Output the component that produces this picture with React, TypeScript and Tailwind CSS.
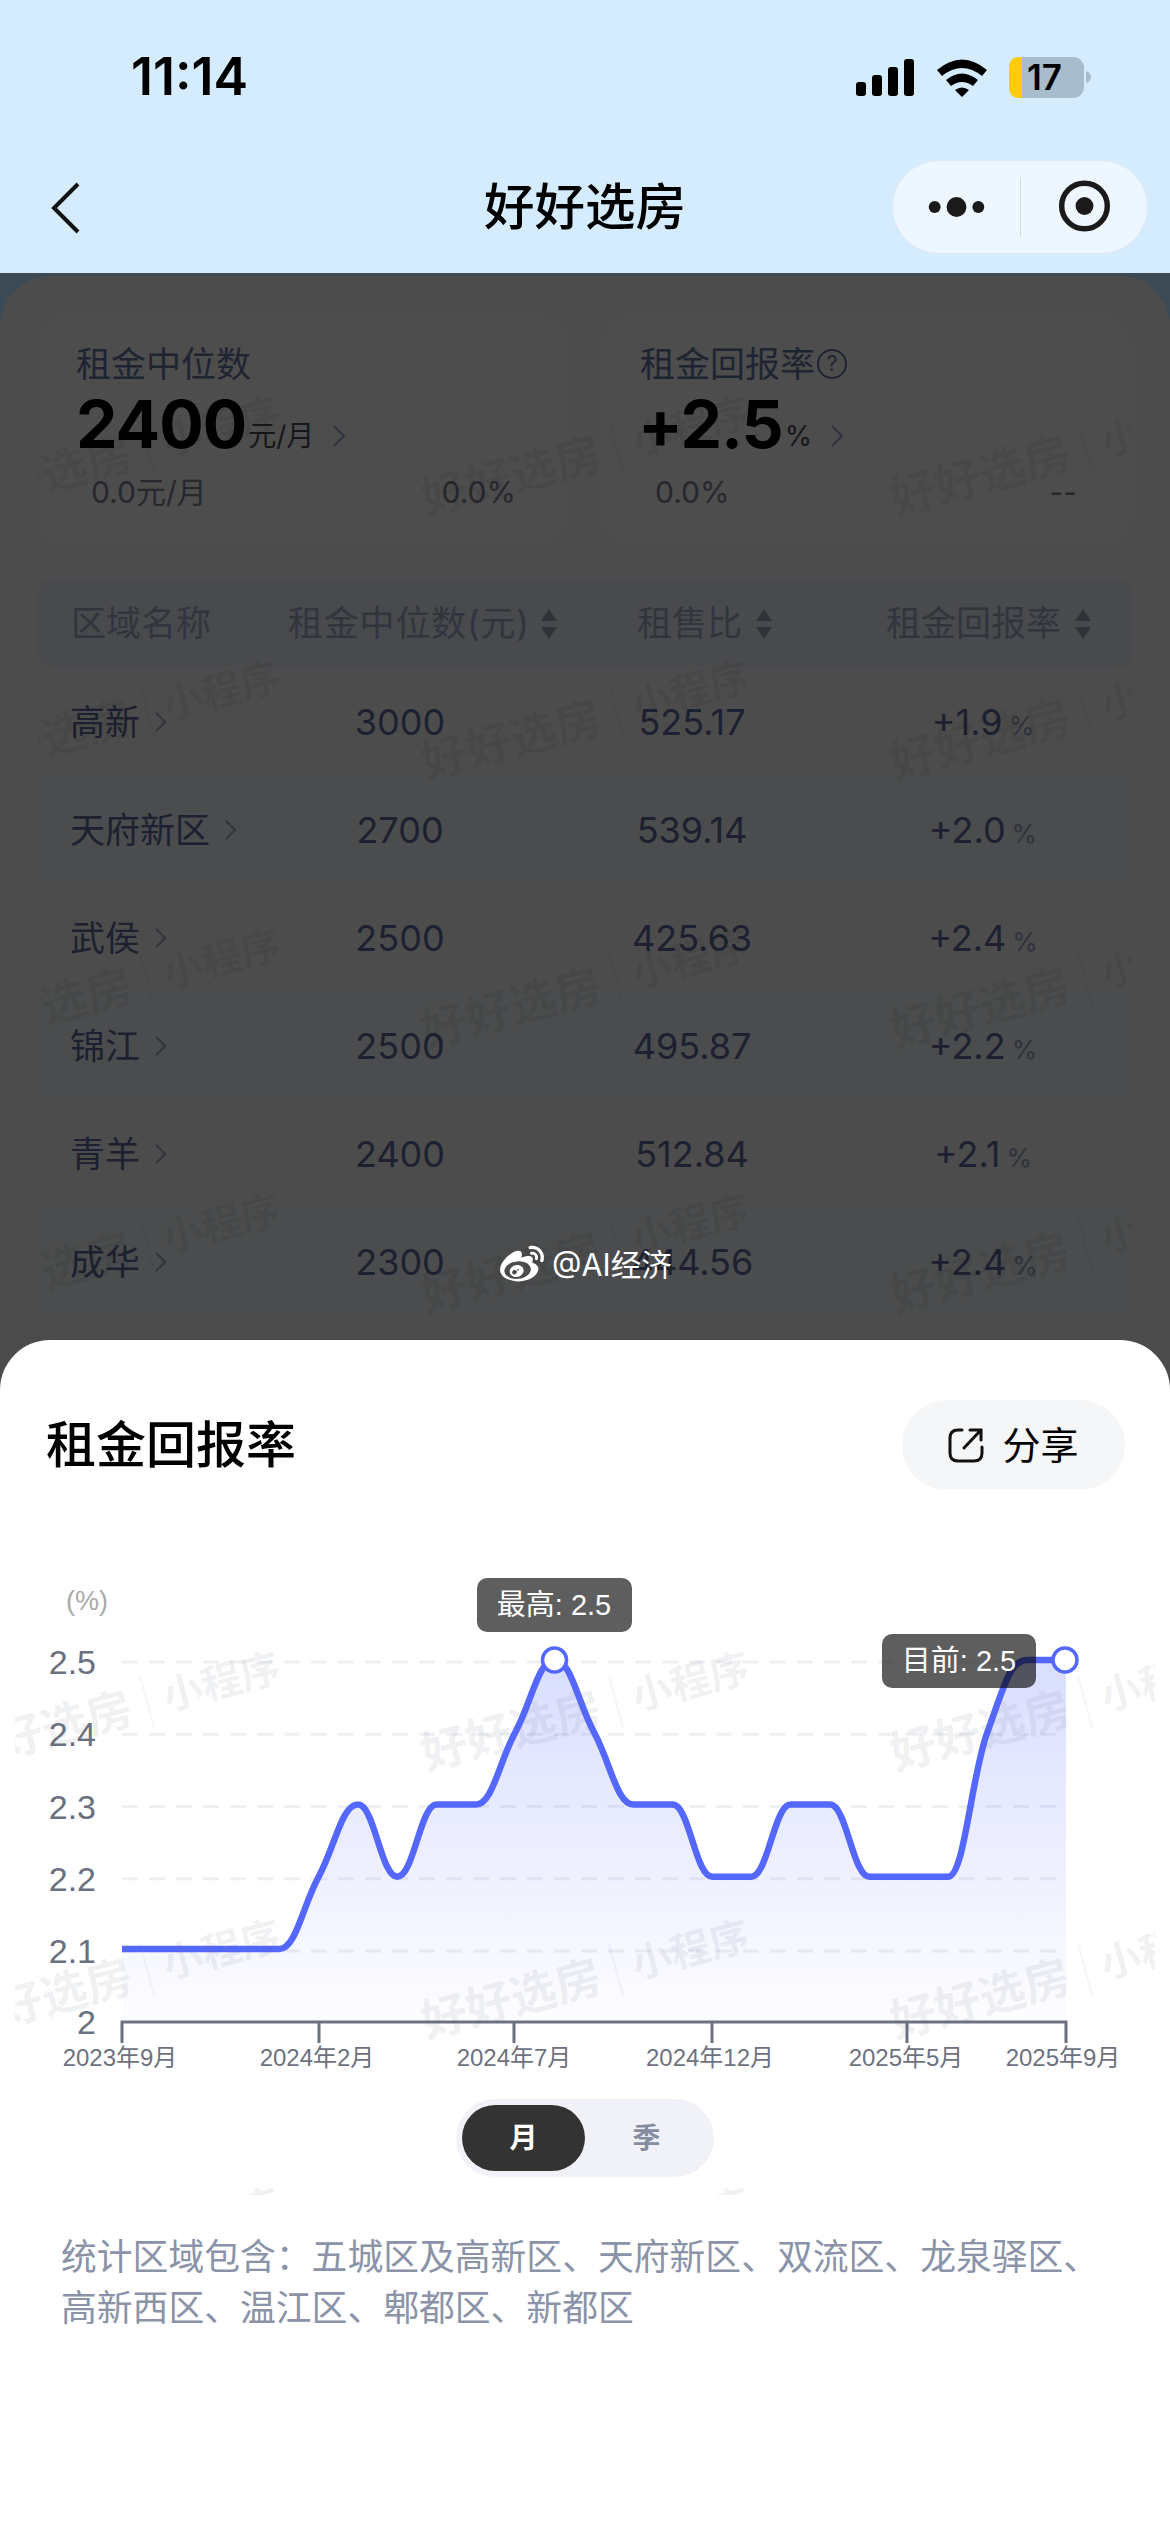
import React from 'react';
import { FaWeibo } from 'react-icons/fa';

const CJK = '"Noto Sans CJK SC"';
const textFont = `Inter, ${CJK}, sans-serif`;
const chartFont = `"Liberation Sans", ${CJK}, sans-serif`;

const rows = [
  { name: '高新', median: '3000', ratio: '525.17', rate: '+1.9' },
  { name: '天府新区', median: '2700', ratio: '539.14', rate: '+2.0' },
  { name: '武侯', median: '2500', ratio: '425.63', rate: '+2.4' },
  { name: '锦江', median: '2500', ratio: '495.87', rate: '+2.2' },
  { name: '青羊', median: '2400', ratio: '512.84', rate: '+2.1' },
  { name: '成华', median: '2300', ratio: '444.56', rate: '+2.4' },
];

// monthly values, 2023-09 to 2025-09
const series = [
  2.1, 2.1, 2.1, 2.1, 2.1, 2.2, 2.3, 2.2, 2.3, 2.3, 2.4, 2.5, 2.4, 2.3, 2.3, 2.2, 2.2, 2.3, 2.3, 2.2, 2.2, 2.2, 2.4,
  2.5, 2.5,
];

const xOf = (i: number) => 122 + (i * (1066 - 122)) / (series.length - 1);
const yOf = (v: number) => 1949 - (v - 2.1) * 722.5;

// monotone curve, flat at every turn and plateau
const buildLine = () => {
  const pts = series.map((v, i) => [xOf(i), yOf(v)]);
  const slope = pts.map((p, i) => {
    if (i === 0 || i === pts.length - 1) return 0;
    const a = p[1] - pts[i - 1][1];
    const b = pts[i + 1][1] - p[1];
    if (a * b <= 0) return 0;
    return (a + b) / 2 / (p[0] - pts[i - 1][0]);
  });
  let d = `M${pts[0][0]} ${pts[0][1]}`;
  for (let i = 1; i < pts.length; i++) {
    const dx = (pts[i][0] - pts[i - 1][0]) * 0.42;
    d += ` C${pts[i - 1][0] + dx} ${pts[i - 1][1] + slope[i - 1] * dx} ${pts[i][0] - dx} ${pts[i][1] - slope[i] * dx} ${pts[i][0]} ${pts[i][1]}`;
  }
  return d;
};

const linePath = buildLine();

const Chevron = ({ className }: { className: string }) => (
  <svg viewBox="0 0 14 24" className={className} fill="none" stroke="currentColor" strokeWidth="2">
    <path d="M2 2l10 10L2 22" />
  </svg>
);

const SortIcon = () => (
  <svg viewBox="0 0 18 32" className="w-[18px] h-[32px] text-[#2f3238] ml-[12px]" fill="currentColor">
    <path d="M9 1l8 12H1zM9 31L1 19h16z" />
  </svg>
);

const Watermark = ({ left, top, tone }: { left: number; top: number; tone: string }) => (
  <div
    className={`absolute flex items-center whitespace-nowrap -rotate-[15deg] origin-top-left ${tone}`}
    style={{ left, top }}
  >
    <span className="text-[46px] font-bold leading-none">好好选房</span>
    <span className="w-[2px] h-[54px] bg-current opacity-60 mx-[16px]" />
    <span className="text-[40px] font-bold leading-none">小程序</span>
  </div>
);

const StatusBar = () => (
  <div className="h-[160px] relative">
    <span className="absolute left-[131px] top-[47px] text-[52px] leading-[60px] font-semibold text-black">
      11:14
    </span>
    <svg className="absolute left-[850px] top-[50px]" width="250" height="56" viewBox="850 50 250 56">
      <rect x="856" y="82" width="10" height="14" rx="3" />
      <rect x="872" y="75" width="10" height="21" rx="3" />
      <rect x="888" y="67" width="10" height="29" rx="3" />
      <rect x="904" y="59" width="10" height="37" rx="3" />
      <path
        d="M937 70q25-21 50 0l-5 6q-20-16-40 0zM946 80q16-13 32 0l-5 6q-11-8-22 0zM955 90q7-5 14 0l-7 7z"
        fill="#000"
      />
      <rect x="1009" y="57" width="75" height="41" rx="11" fill="#a9bccb" />
      <path d="M1020 57h2v41h-2q-11 0-11-11V68q0-11 11-11z" fill="#ffcc00" />
      <path d="M1086 71q5 2 5 6t-5 6z" fill="#a9bccb" />
    </svg>
    <span className="absolute left-[1027px] top-[54px] text-[35px] leading-[46px] font-semibold text-black">17</span>
  </div>
);

const NavBar = () => (
  <div className="h-[113px] relative flex justify-center">
    <svg className="absolute left-[50px] top-[22px]" width="30" height="52" viewBox="0 0 30 52" fill="none" stroke="#111" strokeWidth="4">
      <path d="M28 2L4 26l24 24" />
    </svg>
    <span className="text-[50.5px] leading-[94px] text-black font-medium">好好选房</span>
    <div className="absolute left-[892px] top-0 w-[256px] h-[94px] rounded-full bg-[#eef7ff] border border-[#e0e9f1] flex items-center">
      <svg width="256" height="94" viewBox="892 160 256 94" fill="#1a1a1a">
        <circle cx="934" cy="207" r="6" />
        <circle cx="956" cy="207" r="10" />
        <circle cx="978" cy="207" r="6" />
        <rect x="1020" y="177" width="1" height="60" fill="#d3dbe2" />
        <circle cx="1085" cy="206" r="23" fill="none" stroke="#1a1a1a" strokeWidth="5.5" />
        <circle cx="1085" cy="206" r="9" />
      </svg>
    </div>
  </div>
);

const StatCard = ({ children }: { children: React.ReactNode }) => (
  <div className="relative h-[230px] rounded-[28px] bg-[#4d4d4d] px-[38px] pt-[27px]">{children}</div>
);

const Stats = () => (
  <div className="grid grid-cols-2 gap-[34px] pt-[39px]">
    <StatCard>
      <div className="text-[35px] leading-[44px] text-[#1f2433]">租金中位数</div>
      <div className="flex items-end h-[76px]">
        <span className="text-[66px] leading-[76px] font-bold text-black tracking-[-1px]">2400</span>
        <span className="text-[28px] leading-[44px] text-[#15171c] ml-[2px] mb-[4px]">元/月</span>
        <Chevron className="w-[14px] h-[24px] text-[#2f333d] ml-[18px] mb-[14px]" />
      </div>
      <div className="flex justify-between items-center mt-[7px] h-[46px] pl-[15px] pr-[14px] text-[30px] text-[#26282d]">
        <span>0.0元/月</span>
        <span>0.0%</span>
      </div>
    </StatCard>
    <StatCard>
      <div className="flex items-center text-[35px] leading-[44px] text-[#1f2433]">
        租金回报率
        <span className="w-[30px] h-[30px] rounded-full border-2 border-[#1f2433] text-[21px] leading-[26px] text-center ml-[2px]">
          ?
        </span>
      </div>
      <div className="flex items-end h-[76px]">
        <span className="text-[66px] leading-[76px] font-bold text-black tracking-[-1px] -ml-[2px]">+2.5</span>
        <span className="text-[28px] leading-[44px] text-[#15171c] ml-[2px] mb-[4px]">%</span>
        <Chevron className="w-[14px] h-[24px] text-[#2f333d] ml-[18px] mb-[14px]" />
      </div>
      <div className="flex justify-between items-center mt-[7px] h-[46px] pl-[15px] pr-[17px] text-[30px] text-[#26282d]">
        <span>0.0%</span>
        <span>--</span>
      </div>
    </StatCard>
  </div>
);

const RentTable = () => (
  <div className="mt-[34px]">
    <div className="h-[89px] rounded-[14px] bg-[#484a4d] flex items-center pl-[33px] text-[35px] text-[#32353d] whitespace-nowrap">
      <span className="w-[139px]">区域名称</span>
      <span className="ml-[78px] w-[240px] tracking-[0.8px]">租金中位数(元)</span>
      <SortIcon />
      <span className="ml-[79px] w-[106px]">租售比</span>
      <SortIcon />
      <span className="ml-[113px] w-[176px]">租金回报率</span>
      <SortIcon />
    </div>
    {rows.map((row, i) => (
      <div
        key={row.name}
        className={`h-[108px] grid grid-cols-[212px_300px_284px_298px] items-center text-[36px] text-[#1d2030] ${
          i % 2 === 0 ? 'bg-[#4c4c4c]' : 'bg-[#4a4c4d]'
        }`}
      >
        <div className="flex items-center pl-[32px] text-[35px]">
          <span>{row.name}</span>
          <Chevron className="w-[13px] h-[22px] text-[#2f333d] ml-[14px]" />
        </div>
        <div className="text-center">{row.median}</div>
        <div className="text-center">{row.ratio}</div>
        <div className="text-center">
          {row.rate}
          <span className="text-[26px] text-[#2f333d] ml-[6px]">%</span>
        </div>
      </div>
    ))}
  </div>
);

const RateChart = () => (
  <svg className="block mt-[50px]" width="1170" height="540" viewBox="0 1540 1170 540" style={{ fontFamily: chartFont }}>
    <defs>
      <linearGradient id="rate-area" x1="0" y1="0" x2="0" y2="1">
        <stop offset="0" stopColor="#5468ff" stopOpacity="0.22" />
        <stop offset="1" stopColor="#5468ff" stopOpacity="0.01" />
      </linearGradient>
    </defs>
    <text x="108" y="1610" textAnchor="end" fontSize="27" fill="#aaaaaa">
      (%)
    </text>
    {[2.5, 2.4, 2.3, 2.2, 2.1].map((v) => (
      <g key={v}>
        <line x1="122" x2="1066" y1={yOf(v) + 2} y2={yOf(v) + 2} stroke="#eef0f3" strokeWidth="3" strokeDasharray="16 11" />
        <text x="96" y={yOf(v) + 14} textAnchor="end" fontSize="34" fill="#6b7080">
          {v}
        </text>
      </g>
    ))}
    <text x="96" y="2034" textAnchor="end" fontSize="34" fill="#6b7080">
      2
    </text>
    <path d={`${linePath} L1066 2022 L122 2022 Z`} fill="url(#rate-area)" />
    <path d={linePath} fill="none" stroke="#5468ff" strokeWidth="6.5" />
    <path d="M122 2043V2022H1066V2043M319 2022V2043M514 2022V2043M712 2022V2043M907 2022V2043" fill="none" stroke="#6e7280" strokeWidth="3" />
    {[
      [120, '2023年9月'],
      [317, '2024年2月'],
      [514, '2024年7月'],
      [710, '2024年12月'],
      [906, '2025年5月'],
      [1063, '2025年9月'],
    ].map(([x, label]) => (
      <text key={label} x={x} y="2066" textAnchor="middle" fontSize="24" fill="#6e7280">
        {label}
      </text>
    ))}
    <circle cx="554.5" cy="1660" r="12" fill="#fff" stroke="#5468ff" strokeWidth="3.5" />
    <circle cx="1065" cy="1660" r="12" fill="#fff" stroke="#5468ff" strokeWidth="3.5" />
    <rect x="477" y="1578" width="155" height="54" rx="10" fill="#000" fillOpacity="0.63" />
    <text x="554" y="1615" textAnchor="middle" fontSize="29" fill="#fff">
      最高: 2.5
    </text>
    <rect x="882" y="1634" width="154" height="54" rx="10" fill="#000" fillOpacity="0.63" />
    <text x="959" y="1671" textAnchor="middle" fontSize="29" fill="#fff">
      目前: 2.5
    </text>
  </svg>
);

const DetailSheet = () => (
  <div className="relative z-10 h-[1192px] bg-white rounded-t-[50px]">
    <div className="flex items-center justify-between pl-[46px] pr-[45px] pt-[60px]">
      <span className="text-[50px] leading-[90px] text-black font-medium">租金回报率</span>
      <div className="w-[223px] h-[90px] rounded-full bg-[#f5f6f8] flex items-center justify-center text-black text-[38px]">
        <svg width="36" height="36" viewBox="0 0 36 36" fill="none" stroke="#111" strokeWidth="3" strokeLinecap="round" className="mr-[18px]">
          <path d="M14 3H10Q2 3 2 11V26Q2 34 10 34H26Q34 34 34 26V20" />
          <path d="M16 21L32 4M22 3H33V13" />
        </svg>
        分享
      </div>
    </div>
    <RateChart />
    <div className="mt-[19px] mx-auto w-[258px] h-[78px] rounded-full bg-[#f0f2f8] flex items-center pl-[6px] text-[28px] font-bold">
      <span className="w-[123px] h-[66px] rounded-full bg-[#333333] text-white flex items-center justify-center">月</span>
      <span className="w-[123px] text-center text-[#858c9f]">季</span>
    </div>
    <p className="mt-[55px] px-[61px] text-[35.8px] leading-[51px] text-[#8a93a8]">
      统计区域包含：五城区及高新区、天府新区、双流区、龙泉驿区、高新西区、温江区、郫都区、新都区
    </p>
  </div>
);

export default function App() {
  return (
    <div className="relative w-[1170px] h-[2532px] overflow-hidden bg-[#d5ecfe]" style={{ fontFamily: textFont }}>
      <StatusBar />
      <NavBar />
      <div className="h-[2259px] bg-[#3c4a55]">
        <div className="relative h-[1117px] pt-[3px]">
          <div className="h-full rounded-t-[50px] bg-[#4c4c4c] px-[38px] relative">
            <Stats />
            <RentTable />
            {/* page watermark */}
            <div className="absolute left-[38px] right-[38px] top-0 bottom-0 overflow-hidden pointer-events-none">
              {[197, 461, 729, 994].flatMap((top) =>
                [-92, 377, 846].map((left) => <Watermark key={`${top}-${left}`} left={left} top={top} tone="text-black/[.06]" />),
              )}
            </div>
            <div className="absolute left-[500px] top-[966px] z-20 flex items-center text-white text-[30.5px]">
              <FaWeibo className="w-[44px] h-[44px] mr-[8px]" />
              @AI经济
            </div>
          </div>
        </div>
        <div className="-mt-[50px] relative">
          <DetailSheet />
          {/* chart watermark */}
          <div className="absolute z-20 left-[15px] w-[1140px] top-[160px] h-[695px] overflow-hidden pointer-events-none">
            {[228, 496, 764].flatMap((top) =>
              [-69, 400, 869].map((left) => <Watermark key={`${top}-${left}`} left={left} top={top} tone="text-[#5e6b80]/10" />),
            )}
          </div>
        </div>
      </div>
    </div>
  );
}
